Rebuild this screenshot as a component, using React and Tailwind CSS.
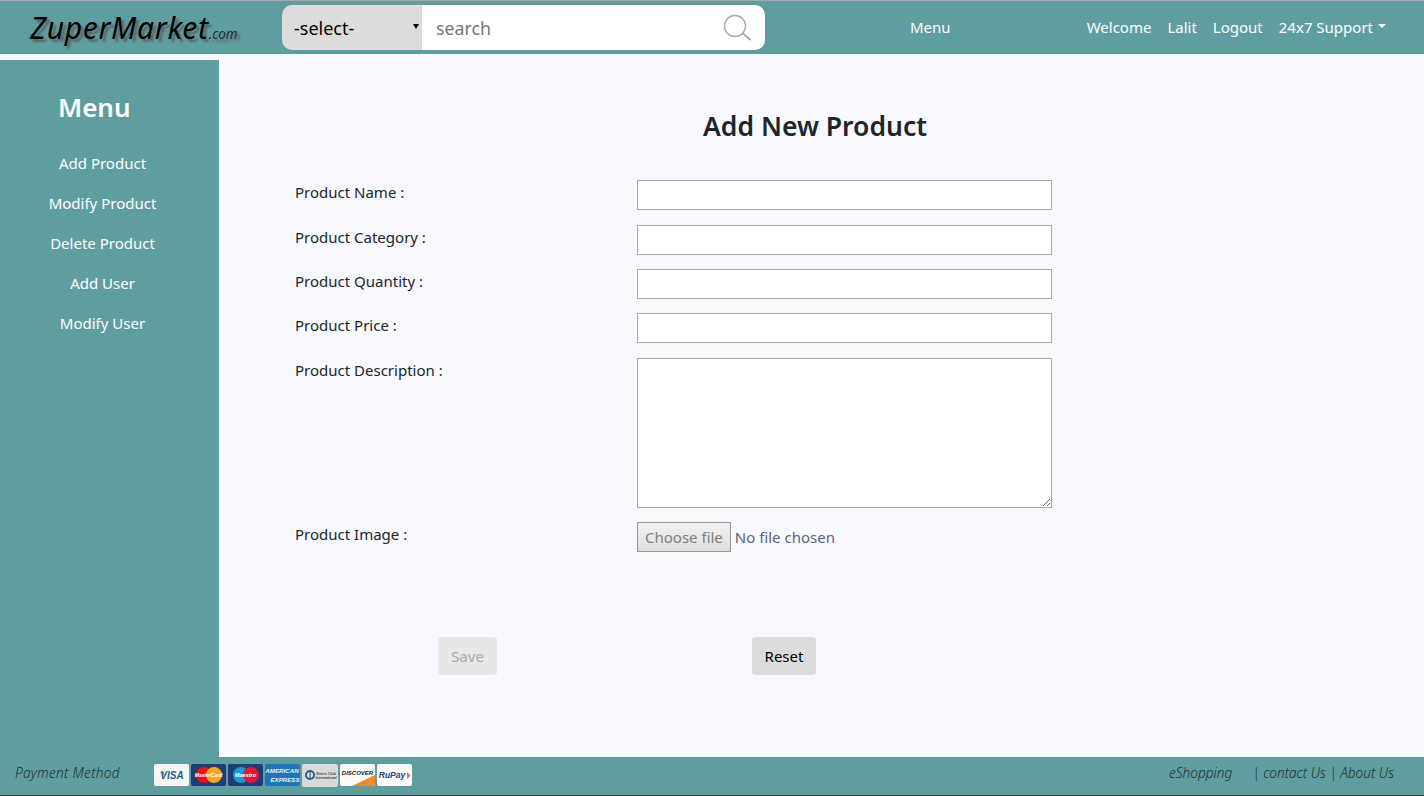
import React from "react";

const font = { fontFamily: '"Noto Sans", "Open Sans", sans-serif' };

function Card({ className = "h-[22px] w-[35px]", bg, children }) {
  return <div className={`shrink-0 overflow-hidden rounded-[2px] ${className} ${bg}`}>{children}</div>;
}

function Cards() {
  return (
    <div className="flex items-center gap-[2px]">
      <Card bg="bg-[#f6f6f6]">
        <svg viewBox="0 0 35 22" className="h-full w-full">
          <path d="M5 8 L10 8 L11 12 Z" fill="#e6a52c" />
          <text x="18" y="15" textAnchor="middle" fontSize="10" fontWeight="800" fill="#1d5f8f" fontFamily="Liberation Sans">VISA</text>
        </svg>
      </Card>
      <Card bg="bg-[#1f3c74]">
        <svg viewBox="0 0 35 22" className="h-full w-full">
          <circle cx="13" cy="11" r="8" fill="#e8121d" />
          <circle cx="23" cy="11" r="8" fill="#f5a623" />
          <text x="17.5" y="13" textAnchor="middle" fontSize="5" fontWeight="700" fontStyle="italic" fill="#fff" fontFamily="Liberation Sans">MasterCard</text>
        </svg>
      </Card>
      <Card bg="bg-[#1f3c74]">
        <svg viewBox="0 0 35 22" className="h-full w-full">
          <circle cx="13" cy="11" r="8" fill="#1b9ad6" />
          <circle cx="23" cy="11" r="8" fill="#dc1a35" />
          <text x="17.5" y="13" textAnchor="middle" fontSize="5.5" fontWeight="700" fontStyle="italic" fill="#fff" fontFamily="Liberation Sans">Maestro</text>
        </svg>
      </Card>
      <Card bg="bg-[#1f76b4]">
        <svg viewBox="0 0 35 22" className="h-full w-full">
          <text x="17" y="9" textAnchor="middle" fontSize="6.2" fontWeight="700" fill="#e8f2fa" fontFamily="Liberation Sans">AMERICAN</text>
          <text x="20" y="18" textAnchor="middle" fontSize="6.2" fontWeight="700" fill="#e8f2fa" fontFamily="Liberation Sans">EXPRESS</text>
        </svg>
      </Card>
      <Card className="h-[23px] w-[36px]" bg="bg-[#d9d9d9]">
        <svg viewBox="0 0 36 23" className="h-full w-full">
          <circle cx="8" cy="11" r="5" fill="#2b5c94" />
          <circle cx="8" cy="11" r="3" fill="#e6e6e6" />
          <rect x="7.4" y="8" width="1.2" height="6" fill="#2b5c94" />
          <text x="24" y="10.5" textAnchor="middle" fontSize="3.5" fontWeight="700" fill="#444" fontFamily="Liberation Sans">Diners Club</text>
          <text x="24" y="15" textAnchor="middle" fontSize="3.5" fontWeight="700" fill="#444" fontFamily="Liberation Sans">International</text>
        </svg>
      </Card>
      <Card bg="bg-[#fafafa]">
        <svg viewBox="0 0 35 22" className="h-full w-full">
          <path d="M12 22 L35 11 L35 22 Z" fill="#ef8a2a" />
          <text x="17.5" y="10.5" textAnchor="middle" fontSize="6" fontWeight="700" fill="#222" fontFamily="Liberation Sans">DISCOVER</text>
        </svg>
      </Card>
      <Card bg="bg-[#fafafa]">
        <svg viewBox="0 0 35 22" className="h-full w-full">
          <text x="15" y="14" textAnchor="middle" fontSize="8.5" fontWeight="800" fontStyle="italic" fill="#23418f" fontFamily="Liberation Sans">RuPay</text>
          <path d="M30 8 L33.5 11.5 L30 15 Z" fill="#e8801f" />
        </svg>
      </Card>
    </div>
  );
}

function Row({ label, h = "h-[30px]", mb, children }) {
  return (
    <div className={`flex ${mb}`}>
      <label className="w-[342px] shrink-0 text-[15px] leading-[24px] text-[#212529]">{label}</label>
      <div className={`w-[415px] ${h}`}>{children}</div>
    </div>
  );
}

const inputCls = "block h-full w-full border border-[#a9a9a9] bg-white outline-none";

export default function App() {
  return (
    <div style={font} className="flex h-[796px] w-[1424px] flex-col overflow-hidden bg-[#f8f9ff]">
      <header className="flex h-[54px] shrink-0 items-center border-t border-[#a9a9a9] bg-[#5f9ea0]">
        <div className="w-[282px] shrink-0 pl-[30px] pt-[3px] whitespace-nowrap text-black [text-shadow:3px_3px_2px_#5c6668]">
          <span className="text-[30px] italic leading-none tracking-[0.7px]">ZuperMarket</span>
          <span className="text-[13.5px] italic text-[#20302f]">.com</span>
        </div>
        <div className="flex h-[45px] w-[483px] shrink-0 overflow-hidden rounded-[10px]">
          <div className="relative flex w-[140px] items-center bg-[#dcdcdc] pl-[12px] pt-[1px] text-[18px] text-black">
            -select-
            <span className="absolute right-[3px] top-[19px] h-0 w-0 border-x-[3px] border-t-[5px] border-x-transparent border-t-black" />
          </div>
          <div className="flex flex-1 items-center justify-between bg-white pl-[14px] pr-[13px]">
            <span className="pt-[1px] text-[17.8px] text-[#757575]">search</span>
            <svg width="30" height="28" viewBox="0 0 30 28" fill="none" stroke="#ababab">
              <circle cx="13" cy="12" r="10.5" strokeWidth="1.4" />
              <path d="M21 19.5 L28 25.5" strokeWidth="2" strokeLinecap="round" />
            </svg>
          </div>
        </div>
        <span className="ml-[145px] text-[15px] text-white">Menu</span>
        <nav className="ml-auto flex items-center gap-[16px] pr-[38px] text-[15px] text-white">
          <span>Welcome</span>
          <span>Lalit</span>
          <span>Logout</span>
          <span className="flex items-center">
            24x7 Support
            <span className="mb-[3px] ml-[5px] h-0 w-0 border-x-[4px] border-t-[4px] border-x-transparent border-t-white" />
          </span>
        </nav>
      </header>

      <div className="mt-[6px] flex min-h-0 flex-1">
        <aside className="w-[219px] shrink-0 bg-[#5f9ea0] text-white">
          <h2 className="mb-[25px] pl-[58px] pt-[27px] text-[26px] font-semibold leading-[40px]">Menu</h2>
          <ul className="flex flex-col gap-[18px] pr-[14px] text-center text-[15px] leading-[22px]">
            <li>Add Product</li>
            <li>Modify Product</li>
            <li>Delete Product</li>
            <li>Add User</li>
            <li>Modify User</li>
          </ul>
        </aside>

        <main className="flex-1 pl-[76px] pt-[47px]">
          <h1 className="mb-[35px] w-[1040px] text-center text-[26.5px] font-semibold leading-[38px] text-[#212529]">Add New Product</h1>
          <form>
            <Row label="Product Name :" mb="mb-[15px]"><input className={inputCls} /></Row>
            <Row label="Product Category :" mb="mb-[14px]"><input className={inputCls} /></Row>
            <Row label="Product Quantity :" mb="mb-[14px]"><input className={inputCls} /></Row>
            <Row label="Product Price :" mb="mb-[15px]"><input className={inputCls} /></Row>
            <Row label="Product Description :" h="h-[150px]" mb="mb-[14px]"><textarea className={inputCls} /></Row>
            <Row label="Product Image :" mb="mb-[85px]">
              <div className="flex h-full items-center text-[15px] text-[#6c757d]">
                <span className="flex h-[30px] items-center border border-[#9a9a9a] bg-gradient-to-b from-[#f2f2f2] to-[#dedede] px-[7px] text-[#808080]">Choose file</span>
                <span className="ml-[4px] text-[#5d6670]">No file chosen</span>
              </div>
            </Row>
            <div className="flex pl-[143px]">
              <button type="button" className="flex h-[38px] w-[59px] items-center justify-center rounded-[3px] bg-[#e7e7e8] text-[15px] text-[#a9a9a9]">Save</button>
              <button type="button" className="ml-[255px] flex h-[38px] w-[64px] items-center justify-center rounded-[3px] bg-[#dcdcdc] text-[15px] text-black">Reset</button>
            </div>
          </form>
        </main>
      </div>

      <footer className="flex h-[39px] shrink-0 items-center border-b border-[#2f4243] bg-[#5f9ea0] pb-[2px] pl-[15px] pr-[30px] text-[13.6px] italic text-[#20302f]">
        <span className="mb-[3px] w-[139px] shrink-0 font-light tracking-[0.3px]">Payment Method</span>
        <Cards />
        <span className="mb-[3px] ml-auto font-light">eShopping</span>
        <span className="mb-[3px] ml-[20px] font-light">| contact Us | About Us</span>
      </footer>
    </div>
  );
}
